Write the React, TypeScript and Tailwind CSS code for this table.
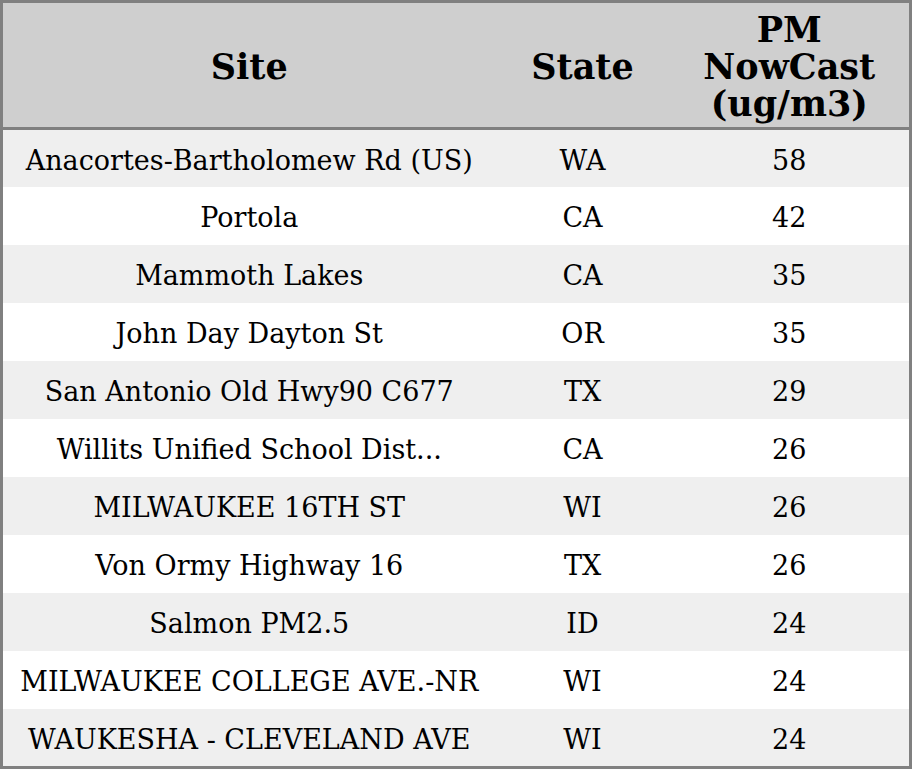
const rows = [
  { site: 'Anacortes-Bartholomew Rd (US)', state: 'WA', pm: 58 },
  { site: 'Portola', state: 'CA', pm: 42 },
  { site: 'Mammoth Lakes', state: 'CA', pm: 35 },
  { site: 'John Day Dayton St', state: 'OR', pm: 35 },
  { site: 'San Antonio Old Hwy90 C677', state: 'TX', pm: 29 },
  { site: 'Willits Unified School Dist...', state: 'CA', pm: 26 },
  { site: 'MILWAUKEE 16TH ST', state: 'WI', pm: 26 },
  { site: 'Von Ormy Highway 16', state: 'TX', pm: 26 },
  { site: 'Salmon PM2.5', state: 'ID', pm: 24 },
  { site: 'MILWAUKEE COLLEGE AVE.-NR', state: 'WI', pm: 24 },
  { site: 'WAUKESHA - CLEVELAND AVE', state: 'WI', pm: 24 },
]

export default function App() {
  return (
    <div className="w-[912px] h-[769px] bg-white font-['DejaVu_Serif',serif] text-black">
      <table className="w-full h-full table-fixed border-collapse border-[3px] border-[#808080]">
        <colgroup>
          <col className="w-[494px]" />
          <col className="w-[174px]" />
          <col />
        </colgroup>
        <thead>
          <tr className="h-[127px] bg-[#cfcfcf] border-b-[3px] border-[#808080] text-[35px] font-bold leading-[37px]">
            <th className="text-center pt-[2px]">Site</th>
            <th className="text-center pt-[2px]">State</th>
            <th className="text-center pt-[2px]">
              PM
              <br />
              NowCast
              <br />
              (ug/m3)
            </th>
          </tr>
        </thead>
        <tbody className="text-[27px]">
          {rows.map((r, i) => (
            <tr key={i} className={`h-[57.7px] ${i % 2 === 0 ? 'bg-[#efefef]' : 'bg-white'}`}>
              <td className="text-center whitespace-nowrap pt-[5px]">{r.site}</td>
              <td className="text-center pt-[5px]">{r.state}</td>
              <td className="text-center pt-[5px]">{r.pm}</td>
            </tr>
          ))}
        </tbody>
      </table>
    </div>
  )
}
